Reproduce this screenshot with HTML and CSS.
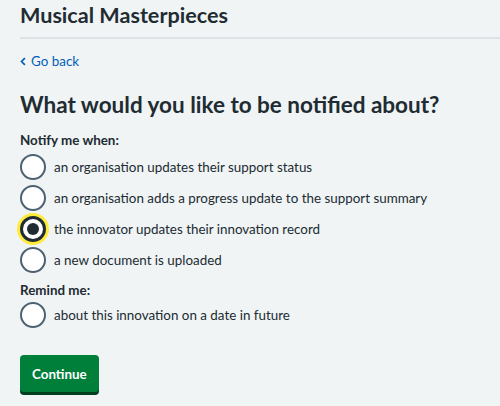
FILE: index.html
```html
<!DOCTYPE html>
<html lang="en">
<head>
<meta charset="utf-8">
<title>Musical Masterpieces</title>
<link rel="stylesheet" href="styles.css">
</head>
<body>
<header class="page-header">
  <div class="service-name">Musical Masterpieces</div>
</header>
<main class="main">
  <a class="back-link" href="#"><svg class="chevron" viewBox="0 0 8 12" width="6" height="9" aria-hidden="true"><path d="M6.5 1.5 L2 6 L6.5 10.5" fill="none" stroke="#005eb8" stroke-width="2.2"/></svg>Go back</a>
  <h1 class="heading">What would you like to be notified about?</h1>
  <form class="form">
    <fieldset class="fieldset">
      <legend class="legend">Notify me when:</legend>
      <label class="radio"><input type="radio" name="n" class="radio-input"><span class="radio-mark"></span><span class="radio-label">an organisation updates their support status</span></label>
      <label class="radio"><input type="radio" name="n" class="radio-input"><span class="radio-mark"></span><span class="radio-label">an organisation adds a progress update to the support summary</span></label>
      <label class="radio"><input type="radio" name="n" class="radio-input" checked><span class="radio-mark is-checked is-focused"></span><span class="radio-label">the innovator updates their innovation record</span></label>
      <label class="radio"><input type="radio" name="n" class="radio-input"><span class="radio-mark"></span><span class="radio-label">a new document is uploaded</span></label>
    </fieldset>
    <fieldset class="fieldset">
      <legend class="legend legend-second">Remind me:</legend>
      <label class="radio"><input type="radio" name="n" class="radio-input"><span class="radio-mark"></span><span class="radio-label">about this innovation on a date in future</span></label>
    </fieldset>
    <button type="button" class="button">Continue</button>
  </form>
</main>
</body>
</html>
```
FILE: styles.css
```css
* { box-sizing: border-box; }
html, body { margin: 0; padding: 0; }
body {
  background: #f0f4f5;
  color: #212b32;
  font-family: Lato, "Noto Sans", Arial, sans-serif;
  width: 500px;
  height: 406px;
  overflow: hidden;
}
.page-header {
  margin-left: 20px;
  border-bottom: 2px solid #dde3e6;
  height: 39px;
}
.service-name {
  font-size: 21.6px;
  font-weight: 700;
  line-height: 30px;
}
.main {
  padding: 0 20px;
}
.back-link {
  display: inline-flex;
  align-items: center;
  gap: 5px;
  margin-top: 14px;
  font-size: 13.4px;
  line-height: 16px;
  color: #005eb8;
  text-decoration: none;
}
.heading {
  font-size: 22.5px;
  font-weight: 700;
  line-height: 28px;
  margin: 22px 0 0;
}
.form { margin-top: 12px; }
.fieldset {
  border: 0;
  margin: 0;
  padding: 0;
  display: flex;
  flex-direction: column;
  gap: 5px;
}
.legend {
  font-size: 13.4px;
  font-weight: 700;
  line-height: 18px;
  padding: 0;
  margin-bottom: 5px;
}
.radio {
  display: flex;
  align-items: center;
  gap: 8px;
  height: 26px;
}
.radio-input { display: none; }
.radio-mark {
  width: 26px;
  height: 26px;
  border: 2px solid #4c6272;
  border-radius: 50%;
  background: #fff;
  flex: none;
  position: relative;
}
.radio-mark.is-focused {
  border: 3px solid #212b32;
  box-shadow: 0 0 0 3px #ffeb3b;
}
.radio-mark.is-checked::after {
  content: "";
  position: absolute;
  left: 50%;
  top: 50%;
  width: 12px;
  height: 12px;
  margin: -6px 0 0 -6px;
  border-radius: 50%;
  background: #212b32;
}
.radio-label {
  font-size: 13.4px;
  line-height: 18px;
}
.fieldset + .fieldset { margin-top: 8px; }
.legend-second { margin-bottom: 3px; }
.button {
  margin-top: 27px;
  background: #007f3b;
  color: #fff;
  border: 0;
  border-radius: 4px;
  box-shadow: 0 3px 0 #00401e;
  font-family: inherit;
  font-size: 13.4px;
  font-weight: 700;
  height: 37px;
  padding: 0 12px;
  cursor: pointer;
}
```
